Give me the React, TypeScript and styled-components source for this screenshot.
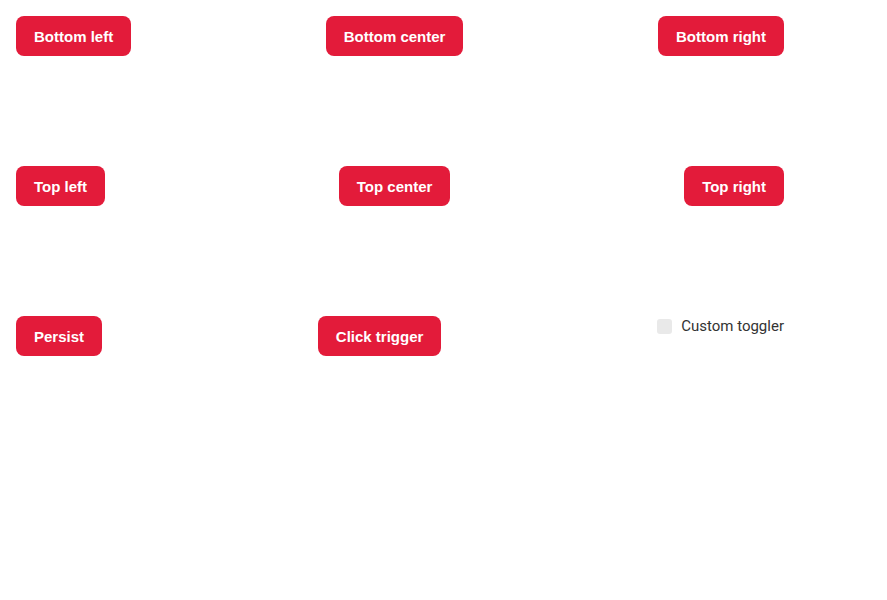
import React from "react";
import styled, { createGlobalStyle } from "styled-components";

const Global = createGlobalStyle`
  html, body { margin: 0; padding: 0; background: #fff; }
  body { font-family: "Liberation Sans", Arial, sans-serif; }
`;

const Page = styled.div`
  width: 768px;
  padding: 16px;
  display: flex;
  flex-direction: column;
  gap: 110px;
`;

const Row = styled.div`
  display: flex;
  justify-content: space-between;
  align-items: flex-start;
`;

const Button = styled.button`
  height: 40px;
  padding: 1px 18px 0;
  border: none;
  border-radius: 8px;
  background: #e31b3a;
  color: #fff;
  font-family: "Liberation Sans", Arial, sans-serif;
  font-weight: 700;
  font-size: 15px;
  cursor: pointer;
`;

const Toggler = styled.label`
  display: flex;
  align-items: center;
  gap: 9px;
  margin-top: 1px;
  font-family: Roboto, "Liberation Sans", sans-serif;
  font-size: 15px;
  color: #333;
`;

const Box = styled.span`
  width: 15px;
  height: 15px;
  border-radius: 3px;
  background: #e9e9e9;
`;

export default function App() {
  return (
    <>
      <Global />
      <Page>
        <Row>
          <Button>Bottom left</Button>
          <Button>Bottom center</Button>
          <Button>Bottom right</Button>
        </Row>
        <Row>
          <Button>Top left</Button>
          <Button>Top center</Button>
          <Button>Top right</Button>
        </Row>
        <Row>
          <Button>Persist</Button>
          <Button>Click trigger</Button>
          <Toggler>
            <Box />
            Custom toggler
          </Toggler>
        </Row>
      </Page>
    </>
  );
}
